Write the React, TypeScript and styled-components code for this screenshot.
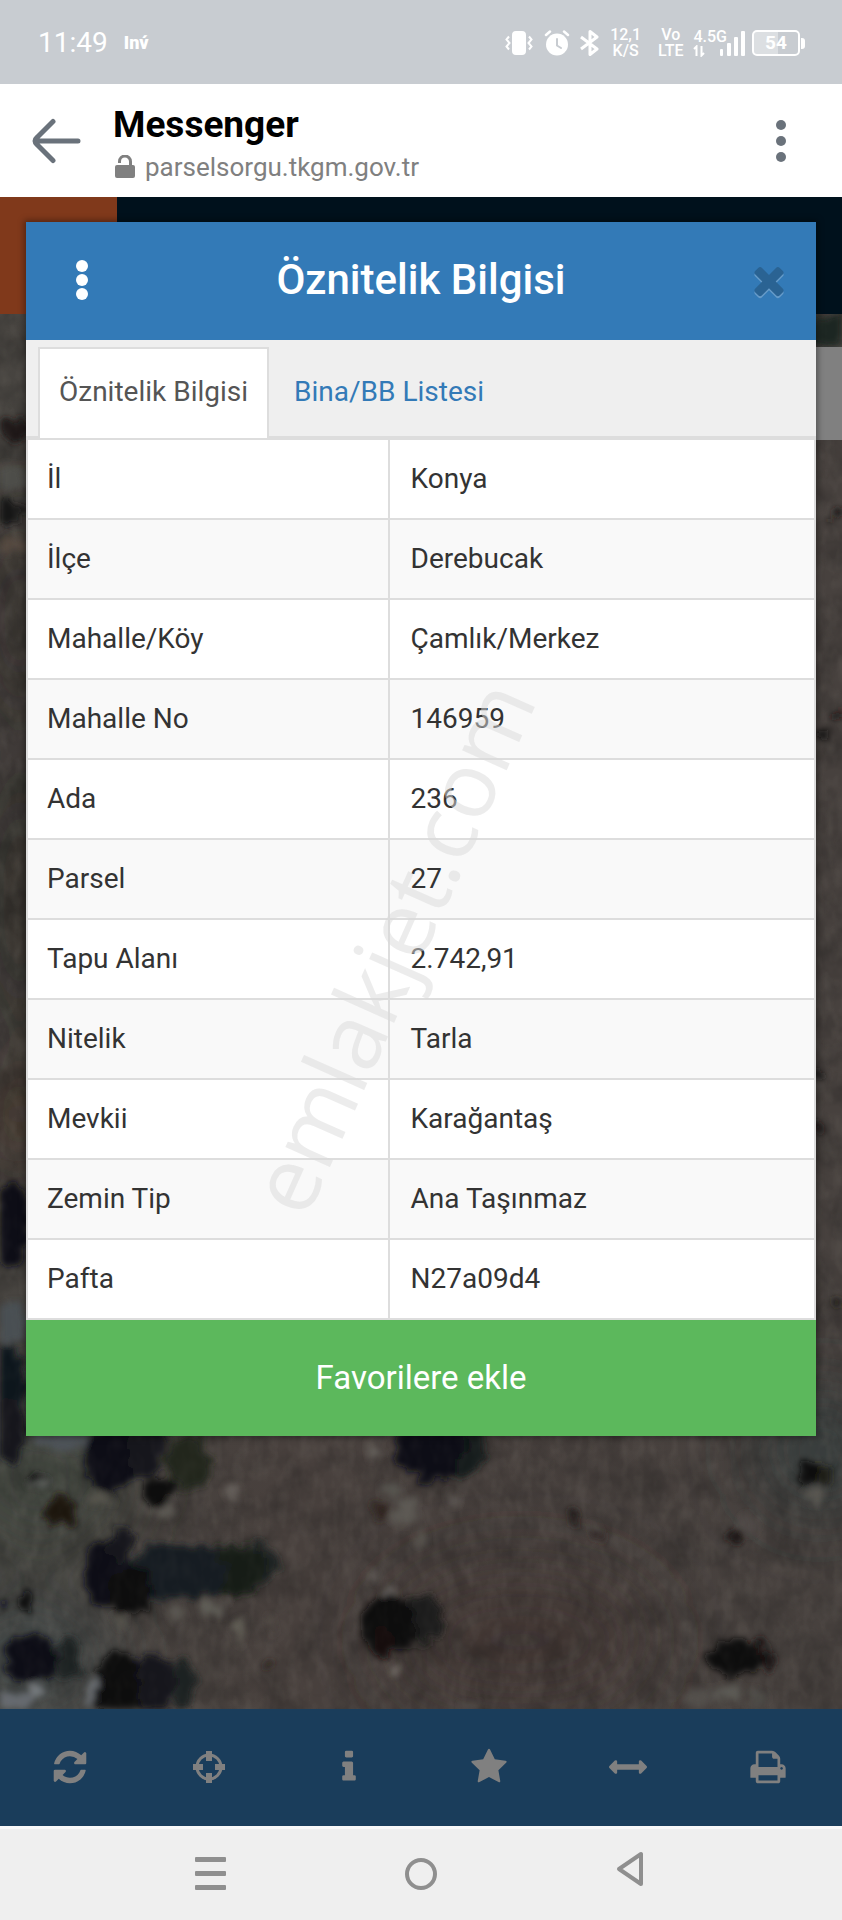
import React from "react";
import styled, { createGlobalStyle } from "styled-components";

const GlobalStyle = createGlobalStyle`
  * { box-sizing: border-box; }
  body { margin: 0; font-family: Roboto, "Liberation Sans", sans-serif; background: #efefef; }
  button { font: inherit; color: inherit; background: none; border: 0; padding: 0; cursor: pointer; }
  svg { display: block; }
`;

const Page = styled.div`
  position: relative;
  display: flex;
  flex-direction: column;
  min-height: 100vh;
  overflow: hidden;
`;

/* ---------- phone status bar ---------- */

const StatusBar = styled.div`
  display: flex;
  align-items: center;
  justify-content: space-between;
  height: 84px;
  padding: 2px 37px 0 38px;
  background: #c8ccd1;
  color: #fff;
`;

const StatusGroup = styled.div<{ $gap: number }>`
  display: flex;
  align-items: center;
  gap: ${(p) => p.$gap}px;
`;

const Clock = styled.span`
  font-size: 28px;
  line-height: 32px;
`;

const Carrier = styled.span`
  font-size: 18px;
  line-height: 20px;
  font-weight: 900;
`;

const StackedLabel = styled.span<{ $end?: number }>`
  display: flex;
  flex-direction: column;
  align-items: center;
  margin-right: ${(p) => p.$end ?? 0}px;
  font-size: 16px;
  line-height: 16px;
  font-weight: 500;
`;

const Signal = styled.span`
  display: flex;
  align-items: center;
`;

const SignalLabel = styled(StackedLabel)`
  align-items: flex-start;
  margin-right: -7px;
`;

const Battery = styled.span`
  display: flex;
  align-items: center;
  margin-left: -4px;
`;

const BatteryBody = styled.span`
  width: 48px;
  height: 26px;
  border: 2px solid #fff;
  border-radius: 5px;
  background: linear-gradient(90deg, #dcdfe2 54%, transparent 54%);
  font-size: 19px;
  line-height: 22px;
  font-weight: 700;
  text-align: center;
`;

const BatteryTip = styled.span`
  width: 4px;
  height: 11px;
  margin-left: 1px;
  border-radius: 0 3px 3px 0;
  background: #fff;
`;

/* ---------- in-app browser header ---------- */

const BrowserBar = styled.header`
  display: flex;
  align-items: center;
  height: 113px;
  padding: 0 46px 0 32px;
  background: #fff;
`;

const BrowserTitle = styled.div`
  flex: 1;
  margin-left: 32px;
  padding-top: 10px;
`;

const AppName = styled.h1`
  margin: 0;
  font-size: 37px;
  line-height: 42px;
  font-weight: 700;
  color: #000;
`;

const Address = styled.div`
  display: flex;
  align-items: center;
  gap: 10px;
  padding-left: 2px;
  font-size: 26px;
  line-height: 42px;
  color: #808080;
`;

/* ---------- web page ---------- */

const Stage = styled.main`
  position: relative;
  flex: 1;
  isolation: isolate;
`;

const MapImage = styled.svg`
  position: absolute;
  inset: 0;
  z-index: -1;
  width: 100%;
  height: 100%;
`;

const SiteHeader = styled.div`
  height: 117px;
  background: #00111c;
`;

const SiteMenu = styled.div`
  width: 117px;
  height: 100%;
  background: #80391b;
`;

const MapPanel = styled.div`
  position: absolute;
  top: 150px;
  right: 0;
  width: 60px;
  height: 93px;
  background: #808080;
`;

const Dialog = styled.section`
  position: relative;
  margin: -92px 26px 0;
  background: #fff;
  box-shadow: 0 0 6px 2px rgba(0, 0, 0, 0.35);
`;

const DialogHeader = styled.header`
  display: grid;
  grid-template-columns: 94px 1fr 94px;
  align-items: center;
  height: 118px;
  padding-bottom: 2px;
  background: #337ab7;
  color: #fff;
`;

const DialogTitle = styled.h2`
  margin: 0;
  font-size: 42px;
  line-height: 48px;
  font-weight: 500;
  text-align: center;
`;

const HeaderButton = styled.button`
  display: flex;
  justify-content: center;
  padding: 0 10px;
`;

const DialogMenuButton = styled(HeaderButton)`
  padding-left: 28px;
`;

const CloseButton = styled(HeaderButton)`
  color: #2a6393;
  filter: drop-shadow(0 2px 0 rgba(255, 255, 255, 0.25));
`;

const Tabs = styled.nav`
  display: flex;
  gap: 4px;
  height: 100px;
  padding: 7px 12px 0;
  border-bottom: 4px solid #ddd;
  background: #efefef;
`;

const Tab = styled.a<{ $active?: boolean }>`
  height: 91px;
  padding: 0 19px;
  border: 2px solid ${(p) => (p.$active ? "#ddd" : "transparent")};
  border-bottom: 0;
  background: ${(p) => (p.$active ? "#fff" : "none")};
  color: ${(p) => (p.$active ? "#555" : "#337ab7")};
  font-size: 28px;
  line-height: 86px;
  text-decoration: none;
`;

const Table = styled.table`
  width: 100%;
  table-layout: fixed;
  border-collapse: separate;
  border-spacing: 0;
  border: 0 solid #ddd;
  border-width: 0 2px;
  font-size: 28px;
  line-height: 40px;
  color: #333;

  tr:nth-child(even) { background: #f9f9f9; }
`;

const NameCell = styled.th`
  width: 46%;
  height: 80px;
  padding: 0 19px;
  border-right: 2px solid #ddd;
  border-bottom: 2px solid #ddd;
  font-weight: 400;
  text-align: left;
`;

const ValueCell = styled.td`
  padding: 0 21px;
  border-bottom: 2px solid #ddd;
`;

const FavouriteButton = styled.button`
  display: block;
  width: 100%;
  height: 116px;
  padding-bottom: 2px;
  background: #5cb85c;
  color: #fff;
  font-size: 33px;
`;

const Toolbar = styled.nav`
  display: grid;
  grid-template-columns: repeat(6, 1fr);
  height: 117px;
  padding: 0 4px 2px 0;
  background: #1a3d5b;
  color: #808080;
`;

const ToolButton = styled.button`
  display: flex;
  align-items: center;
  justify-content: center;
`;

/* ---------- phone navigation ---------- */

const PhoneNav = styled.nav`
  display: grid;
  grid-template-columns: repeat(3, 1fr);
  height: 94px;
  padding: 0 12.5% 2px;
  border-top: 3px solid #f8f8f8;
  background: #efefef;
  color: #8f8f8f;
`;

const Watermark = styled.div`
  position: absolute;
  top: 50%;
  left: 50%;
  padding-bottom: 68px;
  transform: translate(-50%, -50%) rotate(-66deg);
  font-family: "Open Sans", "Noto Sans", sans-serif;
  font-size: 91px;
  line-height: 100px;
  white-space: nowrap;
  color: rgba(218, 218, 218, 0.5);
  pointer-events: none;
`;

/* ---------- icons ---------- */

const GLYPHS = {
  refresh:
    "M1639 1056q0 5-1 7-64 268-268 434.5t-478 166.5q-146 0-282.5-55t-243.5-157l-129 129q-19 19-45 19t-45-19-19-45v-448q0-26 19-45t45-19h448q26 0 45 19t19 45-19 45l-137 137q71 66 161 102t187 36q134 0 250-65t186-179q11-17 53-117 8-23 30-23h192q13 0 22.5 9.5t9.5 22.5zm25-800v448q0 26-19 45t-45 19h-448q-26 0-45-19t-19-45 19-45l138-138q-148-137-349-137-134 0-250 65t-186 179q-11 17-53 117-8 23-30 23h-199q-13 0-22.5-9.5t-9.5-22.5v-7q65-268 270-434.5t480-166.5q146 0 284 55.5t245 156.5l130-129q19-19 45-19t45 19 19 45z",
  info:
    "M1216 1344v128q0 26-19 45t-45 19h-512q-26 0-45-19t-19-45v-128q0-26 19-45t45-19h64v-384h-64q-26 0-45-19t-19-45v-128q0-26 19-45t45-19h384q26 0 45 19t19 45v576h64q26 0 45 19t19 45zm-128-1152v192q0 26-19 45t-45 19h-256q-26 0-45-19t-19-45v-192q0-26 19-45t45-19h256q26 0 45 19t19 45z",
  star:
    "M1728 647q0 22-26 48l-363 354 86 500q1 7 1 20 0 21-10.5 35.5t-30.5 14.5q-19 0-40-12l-449-236-449 236q-22 12-40 12-21 0-31.5-14.5t-10.5-35.5q0-6 2-20l86-500-364-354q-25-27-25-48 0-37 56-46l502-73 225-455q19-41 49-41t49 41l225 455 502 73q56 9 56 46z",
  measure:
    "M1792 896q0 26-19 45l-256 256q-19 19-45 19t-45-19-19-45v-128h-1024v128q0 26-19 45t-45 19-45-19l-256-256q-19-19-19-45t19-45l256-256q19-19 45-19t45 19 19 45v128h1024v-128q0-26 19-45t45-19 45 19l256 256q19 19 19 45z",
  print:
    "M448 1536h896v-256h-896v256zm0-640h896v-384h-160q-40 0-68-28t-28-68v-160h-640v640zm1152 64q0-26-19-45t-45-19-45 19-19 45 19 45 45 19 45-19 19-45zm128 0v416q0 13-9.5 22.5t-22.5 9.5h-224v160q0 40-28 68t-68 28h-960q-40 0-68-28t-28-68v-160h-224q-13 0-22.5-9.5t-9.5-22.5v-416q0-79 56.5-135.5t135.5-56.5h64v-544q0-40 28-68t68-28h672q40 0 88 20t76 48l152 152q28 28 48 76t20 88v256h64q79 0 135.5 56.5t56.5 135.5z",
  close:
    "M1490 1322q0 40-28 68l-136 136q-28 28-68 28t-68-28l-294-294-294 294q-28 28-68 28t-68-28l-136-136q-28-28-28-68t28-68l294-294-294-294q-28-28-28-68t28-68l136-136q28-28 68-28t68 28l294 294 294-294q28-28 68-28t68 28l136 136q28 28 28 68t-28 68l-294 294 294 294q28 28 28 68z",
};

function Glyph({ name, size }: { name: keyof typeof GLYPHS; size: number }) {
  return (
    <svg width={size} height={size} viewBox="0 0 1792 1792" fill="currentColor" aria-hidden="true">
      <path d={GLYPHS[name]} />
    </svg>
  );
}

const LocateIcon = () => (
  <svg width="38" height="38" viewBox="0 0 38 38" fill="none" stroke="currentColor" aria-hidden="true">
    <circle cx="19" cy="19" r="12" strokeWidth="3" />
    <path d="M19 3v10M19 25v10M3 19h10M25 19h10" strokeWidth="6" />
  </svg>
);

/* Vertical "more" dots: `step` is the distance between dot centres. */
function Dots({ radius, step, color }: { radius: number; step: number; color: string }) {
  const height = step * 2 + radius * 2;
  return (
    <svg width={radius * 2} height={height} fill={color} aria-hidden="true">
      {[0, 1, 2].map((i) => (
        <circle key={i} cx={radius} cy={radius + i * step} r={radius} />
      ))}
    </svg>
  );
}

const VibrateIcon = () => (
  <svg width="30" height="26" viewBox="0 0 30 26" fill="none" stroke="#fff" strokeWidth="2" aria-hidden="true">
    <rect x="9" y="2" width="12" height="22" rx="3" fill="#fff" />
    <path d="M5 6.500l-2.500 3 3 3.500-3 3.500 2.500 3M25 6.500l2.500 3-3 3.500 3 3.500-2.500 3" />
  </svg>
);

const AlarmIcon = () => (
  <svg width="26" height="26" viewBox="0 0 26 26" fill="none" strokeLinecap="round" aria-hidden="true">
    <circle cx="13" cy="14.500" r="11" fill="#fff" />
    <path d="M2 5l4-3.500M24 5l-4-3.500" stroke="#fff" strokeWidth="2.500" />
    <path d="M13 9v6.500l4 2.500" stroke="#c8ccd1" strokeWidth="2" />
  </svg>
);

const BluetoothIcon = () => (
  <svg width="20" height="26" viewBox="0 0 20 26" fill="none" stroke="#fff" strokeWidth="3" strokeLinejoin="round" aria-hidden="true">
    <path d="M1 7l16 12-7 5.500V1.500L17 7 1 19" />
  </svg>
);

const SignalBars = () => (
  <svg width="26" height="26" viewBox="0 0 26 26" fill="#fff" aria-hidden="true">
    <rect x="0" y="19" width="3" height="7" rx="1" />
    <rect x="7" y="13" width="4" height="13" rx="1" />
    <rect x="14" y="7" width="4" height="19" rx="1" />
    <rect x="21" y="1" width="4" height="25" rx="1" />
  </svg>
);

const DataArrows = () => (
  <svg width="12" height="12" viewBox="0 0 12 12" fill="none" stroke="#fff" strokeWidth="2" aria-hidden="true">
    <path d="M1 4l2.500-2.500V11M11 8L8.500 10.500V1" />
  </svg>
);

const BackArrow = () => (
  <svg width="49" height="46" viewBox="0 0 49 46" fill="none" stroke="#6a727b" strokeWidth="5" strokeLinecap="round" strokeLinejoin="round" aria-hidden="true">
    <path d="M21 3.500L5 19.500Q1 23 5 26.500l16 16M4 23h42" />
  </svg>
);

const LockIcon = () => (
  <svg width="20" height="24" viewBox="0 0 20 24" aria-hidden="true">
    <rect y="10" width="20" height="13" rx="2" fill="#808080" />
    <path d="M4.500 8V6.500a5.500 5.500 0 0 1 11 0V11" fill="none" stroke="#808080" strokeWidth="3" />
  </svg>
);

/* ---------- satellite map ---------- */

type Spot = [x: number, y: number, rx: number, ry: number, fill: string];

const TREES: Spot[] = [
  [188, 1462, 22, 28, "#20271f"],
  [134, 1446, 32, 34, "#14191d"],
  [108, 1457, 23, 36, "#0d0f12"],
  [158, 1491, 15, 14, "#110f0f"],
  [60, 1511, 16, 15, "#1d170f"],
  [40, 1478, 8, 6, "#0e1110"],
  [256, 1565, 22, 22, "#1c2420"],
  [236, 1569, 30, 26, "#141a18"],
  [196, 1572, 30, 27, "#161a20"],
  [162, 1572, 30, 28, "#191f22"],
  [108, 1572, 25, 34, "#0b0c12"],
  [122, 1546, 12, 20, "#14161b"],
  [130, 1592, 22, 24, "#0d0e0f"],
  [68, 1660, 13, 22, "#1c2224"],
  [30, 1658, 26, 25, "#0d0f15"],
  [182, 1684, 16, 22, "#1e2321"],
  [150, 1682, 26, 28, "#13141b"],
  [118, 1686, 22, 34, "#0d0c0e"],
  [462, 1446, 26, 30, "#171d1a"],
  [430, 1442, 36, 40, "#0b1014"],
  [422, 1620, 22, 24, "#1a1d1a"],
  [388, 1624, 28, 30, "#0c0c10"],
  [384, 1642, 13, 16, "#13100e"],
  [756, 1656, 20, 15, "#1a1815"],
  [734, 1658, 27, 19, "#0f0d0c"],
  [820, 1473, 11, 9, "#1c1b18"],
  [808, 1472, 10, 11, "#0b0a09"],
  [735, 1535, 8, 9, "#1e1612"],
  [573, 1516, 7, 6, "#221e1a"],
  [596, 1536, 6, 6, "#2d2420"],
  [381, 1513, 8, 10, "#2d231e"],
  [26, 1603, 8, 8, "#0c0d0e"],
  [2, 1604, 5, 5, "#101112"],
  [270, 1664, 5, 5, "#2a201e"],
  [4, 1385, 22, 40, "#10171c"],
  [12, 1225, 18, 42, "#0e1115"],
  [8, 1430, 18, 32, "#14181b"],
  [16, 430, 12, 12, "#1b1816"],
  [8, 512, 18, 12, "#131517"],
  [838, 515, 6, 5, "#1d1915"],
  [822, 735, 8, 5, "#100e0d"],
  [840, 716, 6, 5, "#150f0d"],
  [818, 1075, 8, 5, "#161412"],
  [817, 1130, 6, 6, "#1a1715"],
  [838, 1300, 7, 5, "#1d1a18"],
  [830, 330, 22, 18, "#1d2724"],
];

const STONES: Spot[] = [
  [16, 1702, 20, 9, "#666b6f"],
  [34, 1690, 9, 8, "#74797d"],
  [94, 1694, 10, 15, "#666a6e"],
  [40, 1480, 8, 9, "#666a66"],
  [100, 1500, 12, 5, "#55534b"],
  [166, 1508, 8, 10, "#5b5852"],
  [232, 1493, 4, 8, "#69645f"],
  [374, 1450, 4, 14, "#65615c"],
  [392, 1490, 9, 9, "#575450"],
  [406, 1512, 12, 14, "#5b5853"],
  [420, 1538, 5, 9, "#57534e"],
  [372, 1578, 6, 7, "#5d5954"],
  [388, 1592, 5, 6, "#686460"],
  [396, 1670, 6, 5, "#706b65"],
  [175, 1612, 7, 6, "#5a5751"],
  [214, 1608, 12, 6, "#5f5d57"],
  [240, 1632, 5, 15, "#605d55"],
  [270, 1626, 3, 8, "#5a544e"],
  [120, 1620, 6, 5, "#57544d"],
  [60, 1440, 28, 8, "#4e5358"],
  [452, 1500, 6, 5, "#5c5752"],
  [594, 1527, 5, 4, "#5f5b56"],
  [748, 1526, 9, 9, "#504a47"],
  [816, 1494, 12, 6, "#575550"],
  [698, 1698, 15, 10, "#52504b"],
  [728, 1692, 14, 8, "#5c5a54"],
  [758, 1698, 10, 9, "#4e4b46"],
  [470, 1706, 12, 4, "#5b5752"],
  [10, 1322, 16, 22, "#4a4f53"],
  [10, 480, 14, 14, "#4e4e4a"],
  [14, 545, 16, 6, "#554a41"],
];

function SatelliteMap() {
  return (
    <MapImage viewBox="0 197 842 1512" preserveAspectRatio="xMidYMax slice" aria-hidden="true">
      <defs>
        <linearGradient id="soil" x1="0" x2="1" y1="0" y2="0">
          <stop offset="0" stopColor="#474440" />
          <stop offset="0.35" stopColor="#48403d" />
          <stop offset="1" stopColor="#47413e" />
        </linearGradient>
        <filter id="haze" x="-50%" y="-50%" width="200%" height="200%">
          <feGaussianBlur stdDeviation="36" />
        </filter>
        <filter id="rough" x="0" y="197" width="842" height="1512" filterUnits="userSpaceOnUse">
          <feTurbulence type="fractalNoise" baseFrequency="0.09" numOctaves="3" seed="8" result="n" />
          <feDisplacementMap in="SourceGraphic" in2="n" scale="22" xChannelSelector="R" yChannelSelector="G" />
          <feGaussianBlur stdDeviation="3" />
        </filter>
        <filter id="mottle" x="0" y="197" width="842" height="1512" filterUnits="userSpaceOnUse" colorInterpolationFilters="sRGB">
          <feTurbulence type="fractalNoise" baseFrequency="0.09 0.05" numOctaves="2" seed="3" />
          <feColorMatrix values="0 0 0 0 0.5  0 0 0 0 0.48  0 0 0 0 0.45  1.2 0 0 0 -0.45" />
        </filter>
        <filter id="shade" x="0" y="197" width="842" height="1512" filterUnits="userSpaceOnUse" colorInterpolationFilters="sRGB">
          <feTurbulence type="fractalNoise" baseFrequency="0.03" numOctaves="4" seed="21" />
          <feColorMatrix values="0 0 0 0 0.06  0 0 0 0 0.06  0 0 0 0 0.06  0 1.4 0 0 -0.5" />
        </filter>
      </defs>
      <rect y="197" width="842" height="1512" fill="url(#soil)" />
      <g filter="url(#haze)">
        <ellipse cx="40" cy="1480" rx="90" ry="80" fill="#42463f" />
        <ellipse cx="30" cy="1660" rx="80" ry="60" fill="#43494a" />
        <ellipse cx="820" cy="1450" rx="60" ry="60" fill="#363d3c" />
        <ellipse cx="520" cy="1640" rx="130" ry="70" fill="#423835" />
        <ellipse cx="20" cy="900" rx="40" ry="160" fill="#322f29" />
        <ellipse cx="20" cy="1120" rx="40" ry="60" fill="#40332a" />
        <ellipse cx="20" cy="620" rx="40" ry="120" fill="#37322d" />
      </g>
      <rect y="197" width="842" height="1512" filter="url(#mottle)" opacity="0.22" />
      <rect y="197" width="842" height="1512" filter="url(#shade)" opacity="0.35" />
      <g filter="url(#rough)">
        {[...STONES, ...TREES].map(([x, y, rx, ry, fill], i) => (
          <ellipse key={i} cx={x} cy={y} rx={rx} ry={ry} fill={fill} />
        ))}
      </g>
      <rect y="197" width="842" height="1512" filter="url(#mottle)" opacity="0.1" />
    </MapImage>
  );
}

const ATTRIBUTES: [string, string][] = [
  ["İl", "Konya"],
  ["İlçe", "Derebucak"],
  ["Mahalle/Köy", "Çamlık/Merkez"],
  ["Mahalle No", "146959"],
  ["Ada", "236"],
  ["Parsel", "27"],
  ["Tapu Alanı", "2.742,91"],
  ["Nitelik", "Tarla"],
  ["Mevkii", "Karağantaş"],
  ["Zemin Tip", "Ana Taşınmaz"],
  ["Pafta", "N27a09d4"],
];

const TOOLS: [React.ReactNode, string][] = [
  [<Glyph name="refresh" size={38} />, "Yenile"],
  [<LocateIcon />, "Konumum"],
  [<Glyph name="info" size={38} />, "Bilgi"],
  [<Glyph name="star" size={38} />, "Favoriler"],
  [<Glyph name="measure" size={38} />, "Ölçüm"],
  [<Glyph name="print" size={38} />, "Yazdır"],
];

export default function App() {
  return (
    <Page>
      <GlobalStyle />
      <StatusBar>
        <StatusGroup $gap={16}>
          <Clock>11:49</Clock>
          <Carrier>Inv́</Carrier>
        </StatusGroup>
        <StatusGroup $gap={10}>
          <VibrateIcon />
          <AlarmIcon />
          <BluetoothIcon />
          <StackedLabel $end={7}>
            <span>12,1</span>
            <span>K/S</span>
          </StackedLabel>
          <StackedLabel>
            <span>Vo</span>
            <span>LTE</span>
          </StackedLabel>
          <Signal>
            <SignalLabel>
              <span>4.5G</span>
              <DataArrows />
            </SignalLabel>
            <SignalBars />
          </Signal>
          <Battery>
            <BatteryBody>54</BatteryBody>
            <BatteryTip />
          </Battery>
        </StatusGroup>
      </StatusBar>

      <BrowserBar>
        <button aria-label="Geri">
          <BackArrow />
        </button>
        <BrowserTitle>
          <AppName>Messenger</AppName>
          <Address>
            <LockIcon />
            parselsorgu.tkgm.gov.tr
          </Address>
        </BrowserTitle>
        <HeaderButton aria-label="Seçenekler">
          <Dots radius={5} step={16} color="#6a727b" />
        </HeaderButton>
      </BrowserBar>

      <Stage>
        <SatelliteMap />
        <SiteHeader>
          <SiteMenu />
        </SiteHeader>
        <MapPanel />
        <Dialog role="dialog" aria-labelledby="dialog-title">
          <DialogHeader>
            <DialogMenuButton aria-label="Menü">
              <Dots radius={6} step={14} color="#fff" />
            </DialogMenuButton>
            <DialogTitle id="dialog-title">Öznitelik Bilgisi</DialogTitle>
            <CloseButton aria-label="Kapat">
              <Glyph name="close" size={44} />
            </CloseButton>
          </DialogHeader>
          <Tabs>
            <Tab href="#oznitelik" $active aria-current="page">
              Öznitelik Bilgisi
            </Tab>
            <Tab href="#bina">Bina/BB Listesi</Tab>
          </Tabs>
          <Table>
            <tbody>
              {ATTRIBUTES.map(([name, value]) => (
                <tr key={name}>
                  <NameCell scope="row">{name}</NameCell>
                  <ValueCell>{value}</ValueCell>
                </tr>
              ))}
            </tbody>
          </Table>
          <FavouriteButton>Favorilere ekle</FavouriteButton>
        </Dialog>
      </Stage>

      <Toolbar>
        {TOOLS.map(([icon, label]) => (
          <ToolButton key={label} aria-label={label}>
            {icon}
          </ToolButton>
        ))}
      </Toolbar>

      <PhoneNav>
        <ToolButton aria-label="Son uygulamalar">
          <svg width="32" height="36" viewBox="0 0 32 36" fill="currentColor" aria-hidden="true">
            <rect y="1" width="31" height="5" rx="1" />
            <rect y="15" width="31" height="5" rx="1" />
            <rect y="29" width="31" height="5" rx="1" />
          </svg>
        </ToolButton>
        <ToolButton aria-label="Ana ekran">
          <svg width="34" height="36" viewBox="0 0 34 36" fill="none" stroke="currentColor" strokeWidth="4" aria-hidden="true">
            <circle cx="17" cy="18" r="14" />
          </svg>
        </ToolButton>
        <ToolButton aria-label="Geri dön">
          <svg width="32" height="46" viewBox="0 0 32 46" fill="none" stroke="currentColor" strokeWidth="4" strokeLinejoin="round" aria-hidden="true">
            <path d="M25 3v30L3 18z" />
          </svg>
        </ToolButton>
      </PhoneNav>

      <Watermark aria-hidden="true">emlakjet.com</Watermark>
    </Page>
  );
}
